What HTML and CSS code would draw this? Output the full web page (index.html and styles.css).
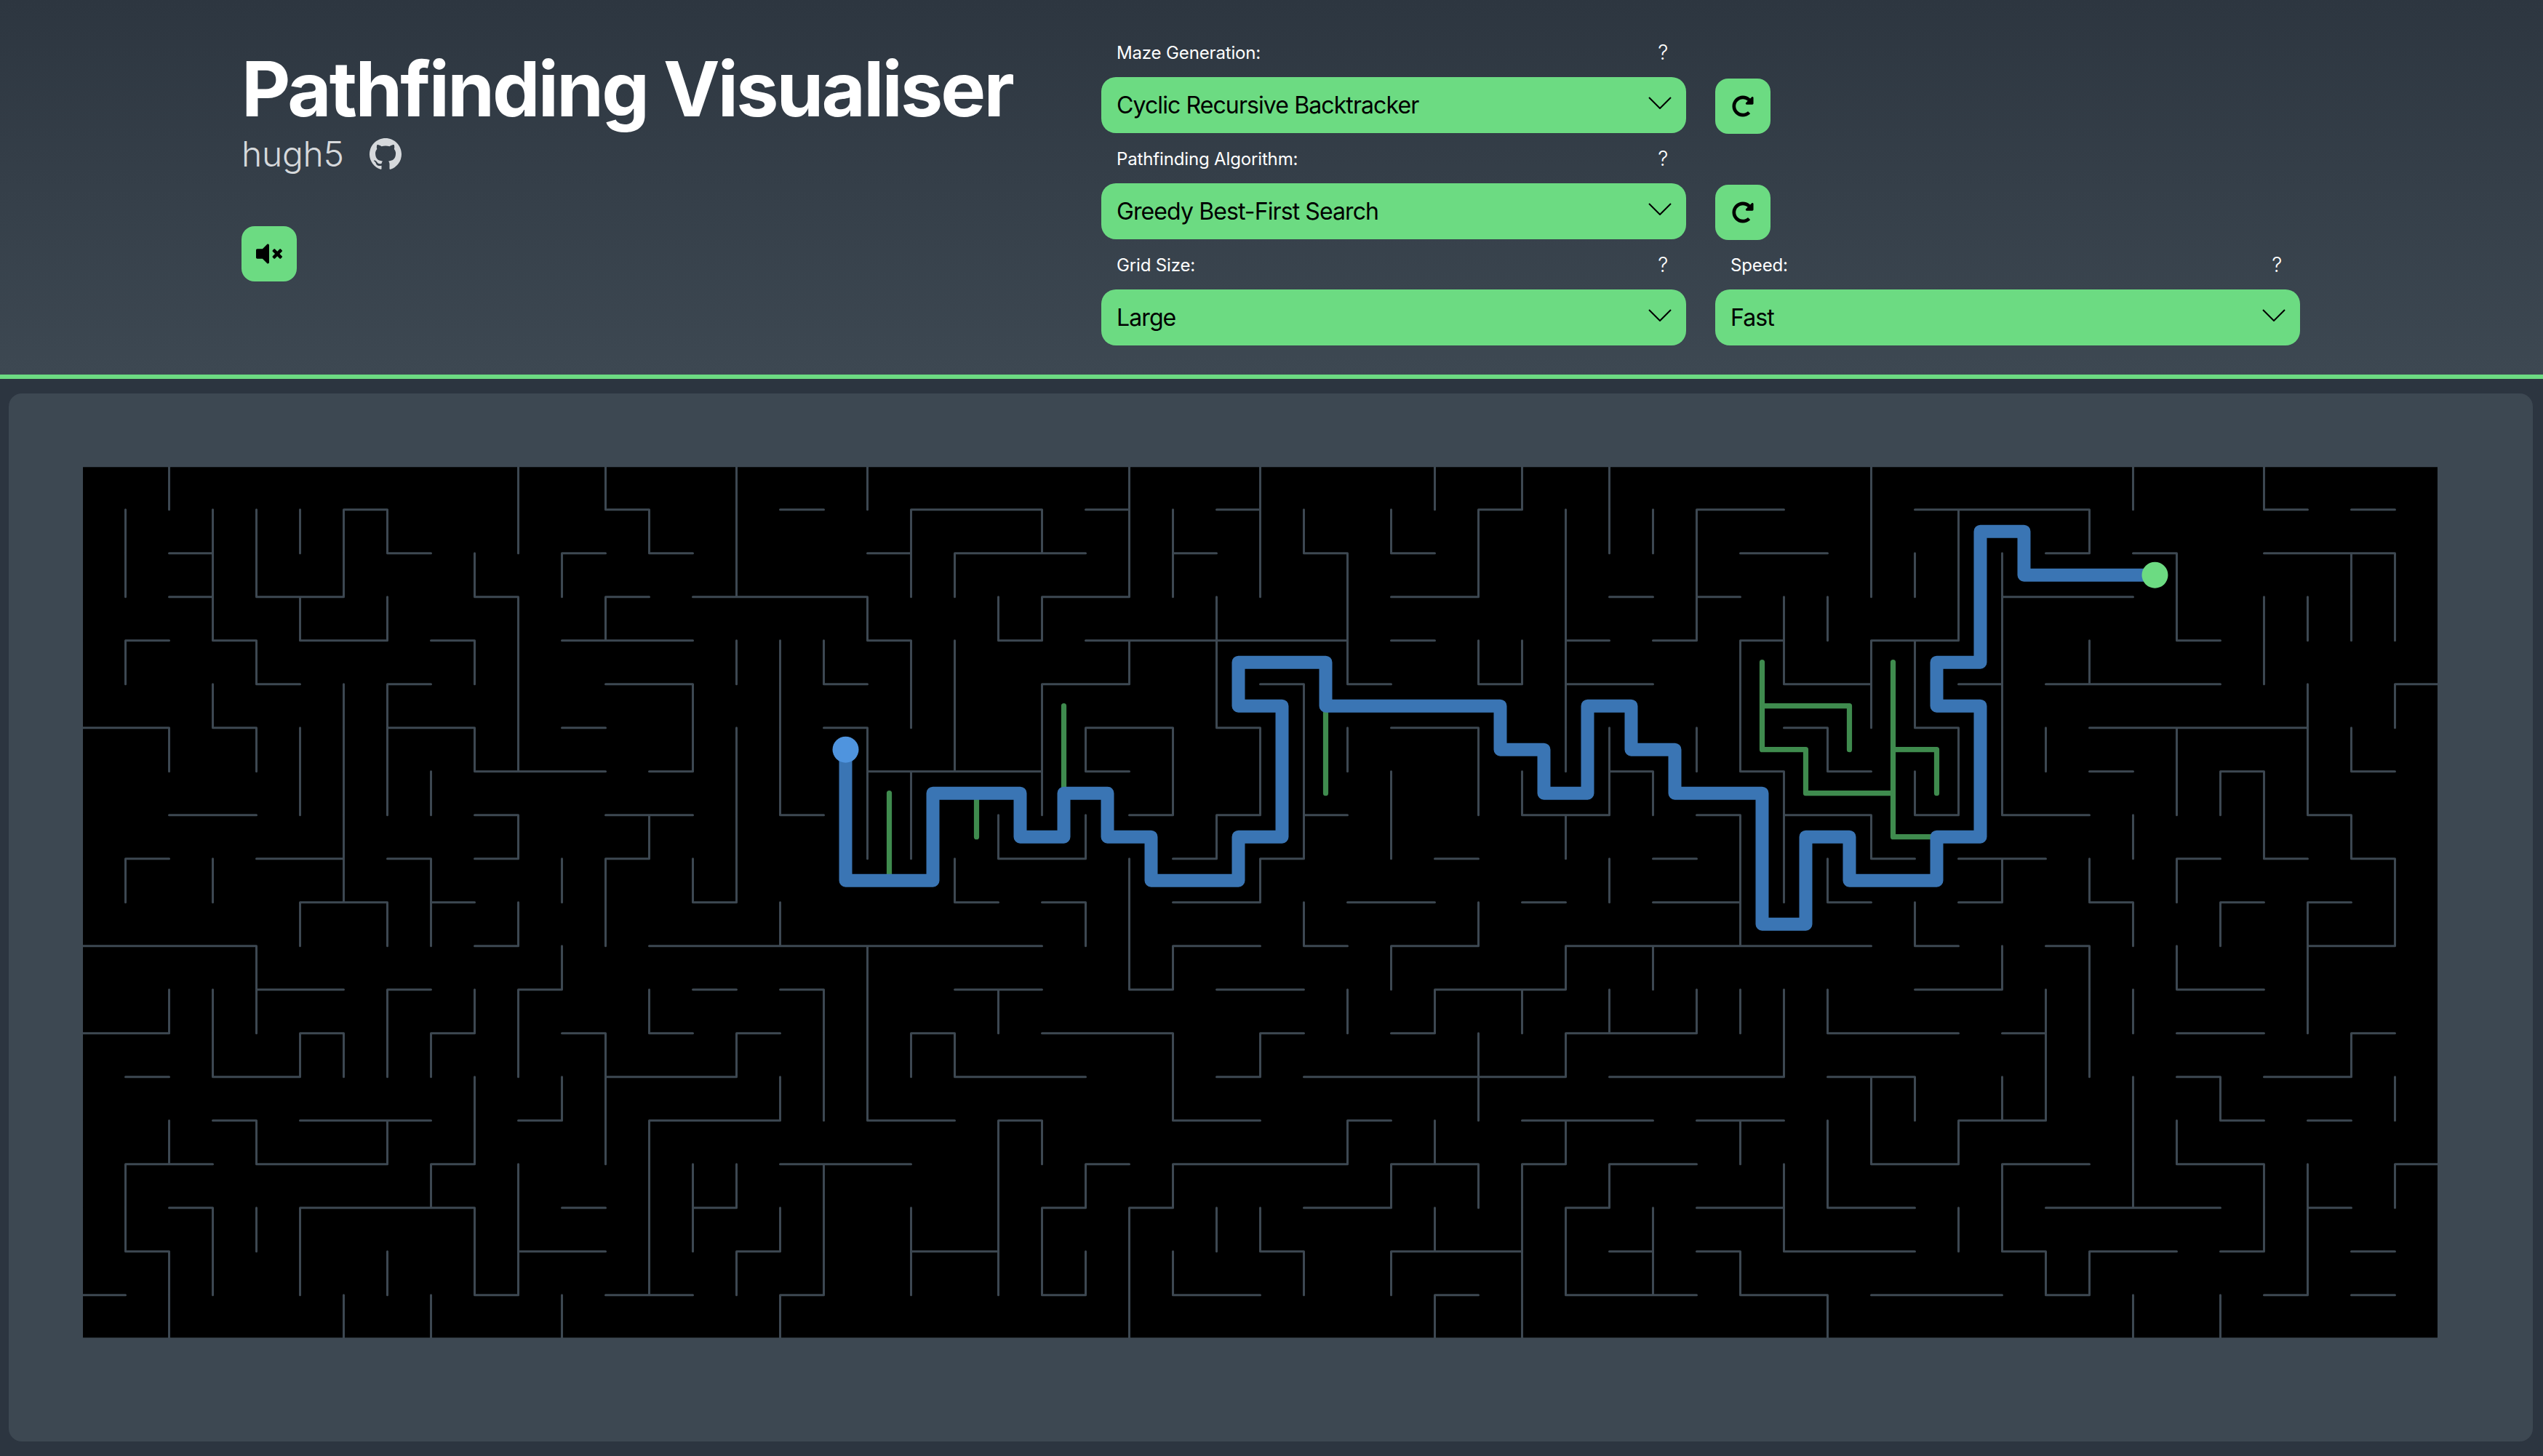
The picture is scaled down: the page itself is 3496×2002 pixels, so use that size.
FILE: index.html
```html
<!DOCTYPE html>
<html lang="en">
<head>
<meta charset="utf-8">
<title>Pathfinding Visualiser</title>
<link rel="stylesheet" href="styles.css">
</head>
<body>
<header class="top">
  <div class="brand">
    <h1 class="title">Pathfinding Visualiser</h1>
    <div class="author">
      <span class="author-name">hugh5</span>
      <svg class="github" viewBox="0 0 16 16"><path d="M8 0C3.58 0 0 3.58 0 8c0 3.54 2.29 6.53 5.47 7.59.4.07.55-.17.55-.38 0-.19-.01-.82-.01-1.49-2.01.37-2.53-.49-2.69-.94-.09-.23-.48-.94-.82-1.13-.28-.15-.68-.52-.01-.53.63-.01 1.08.58 1.23.82.72 1.21 1.87.87 2.33.66.07-.52.28-.87.51-1.07-1.78-.2-3.64-.89-3.64-3.95 0-.87.31-1.59.82-2.15-.08-.2-.36-1.02.08-2.12 0 0 .67-.21 2.2.82.64-.18 1.32-.27 2-.27.68 0 1.36.09 2 .27 1.53-1.04 2.2-.82 2.2-.82.44 1.1.16 1.92.08 2.12.51.56.82 1.27.82 2.15 0 3.07-1.87 3.75-3.65 3.95.29.25.54.73.54 1.48 0 1.07-.01 1.93-.01 2.2 0 .21.15.46.55.38A8.013 8.013 0 0016 8c0-4.42-3.58-8-8-8z"/></svg>
    </div>
    <button class="icon-btn mute" type="button" aria-label="Mute">
      <svg class="icon-mute" viewBox="0 0 512 512"><path d="M215.03 71.05L126.06 160H24c-13.26 0-24 10.74-24 24v144c0 13.25 10.74 24 24 24h102.06l88.97 88.95c15.03 15.03 40.97 4.47 40.97-16.97V88.02c0-21.46-25.96-31.98-40.97-16.97zM461.64 256l45.64-45.64c6.3-6.3 6.3-16.52 0-22.82l-22.82-22.82c-6.3-6.3-16.52-6.3-22.82 0L416 210.36l-45.64-45.64c-6.3-6.3-16.52-6.3-22.82 0l-22.82 22.82c-6.3 6.3-6.3 16.52 0 22.82L370.36 256l-45.63 45.63c-6.3 6.3-6.3 16.52 0 22.82l22.82 22.82c6.3 6.3 16.52 6.3 22.82 0L416 301.64l45.64 45.64c6.3 6.3 16.52 6.3 22.82 0l22.82-22.82c6.3-6.3 6.3-16.52 0-22.82L461.64 256z"/></svg>
    </button>
  </div>
  <div class="controls">
    <div class="field">
      <div class="field-label"><span>Maze Generation:</span><span class="help">?</span></div>
      <div class="select"><span>Cyclic Recursive Backtracker</span><svg class="chevron" viewBox="0 0 32 17"><path d="M1 1L16 16L31 1"/></svg></div>
    </div>
    <button class="icon-btn refresh" type="button" aria-label="Regenerate maze">
      <svg class="icon-redo" viewBox="0 0 512 512"><path d="M256.455 8c66.269.119 126.437 26.233 170.859 68.685l35.715-35.715C478.149 25.851 504 36.559 504 57.941V192c0 13.255-10.745 24-24 24H345.941c-21.382 0-32.09-25.851-16.971-40.971l41.75-41.75c-30.864-28.899-70.801-44.907-113.23-45.273-92.398-.798-170.283 73.977-169.484 169.442C88.764 348.009 162.184 424 256 424c41.127 0 79.997-14.678 110.629-41.556 4.743-4.161 11.906-3.908 16.368.553l39.662 39.662c4.872 4.872 4.631 12.815-.482 17.433C378.202 479.813 319.926 504 256 504 119.034 504 8.001 392.967 8 256.002 7.999 119.193 119.646 7.755 256.455 8z"/></svg>
    </button>
    <div class="field">
      <div class="field-label"><span>Pathfinding Algorithm:</span><span class="help">?</span></div>
      <div class="select"><span>Greedy Best-First Search</span><svg class="chevron" viewBox="0 0 32 17"><path d="M1 1L16 16L31 1"/></svg></div>
    </div>
    <button class="icon-btn refresh" type="button" aria-label="Rerun search">
      <svg class="icon-redo" viewBox="0 0 512 512"><path d="M256.455 8c66.269.119 126.437 26.233 170.859 68.685l35.715-35.715C478.149 25.851 504 36.559 504 57.941V192c0 13.255-10.745 24-24 24H345.941c-21.382 0-32.09-25.851-16.971-40.971l41.75-41.75c-30.864-28.899-70.801-44.907-113.23-45.273-92.398-.798-170.283 73.977-169.484 169.442C88.764 348.009 162.184 424 256 424c41.127 0 79.997-14.678 110.629-41.556 4.743-4.161 11.906-3.908 16.368.553l39.662 39.662c4.872 4.872 4.631 12.815-.482 17.433C378.202 479.813 319.926 504 256 504 119.034 504 8.001 392.967 8 256.002 7.999 119.193 119.646 7.755 256.455 8z"/></svg>
    </button>
    <div class="field">
      <div class="field-label"><span>Grid Size:</span><span class="help">?</span></div>
      <div class="select"><span>Large</span><svg class="chevron" viewBox="0 0 32 17"><path d="M1 1L16 16L31 1"/></svg></div>
    </div>
    <div class="field">
      <div class="field-label"><span>Speed:</span><span class="help">?</span></div>
      <div class="select"><span>Fast</span><svg class="chevron" viewBox="0 0 32 17"><path d="M1 1L16 16L31 1"/></svg></div>
    </div>
  </div>
</header>
<main class="stage">
  <svg class="maze" viewBox="0.025 0.022 53.95 19.967">
    <path class="walls" d="M0 0H54V20H0Z
M2 0V1M10 0V2M12 0V1M13 1V2M15 0V3M18 0V1M1 1V3M3 1V4M4 1V3M5 1V2M6 1V3M7 1V2M5 3V4M7 3V4M9 2V3M10 3V7M11 2V3M12 3V4M18 3V4M1 4V5M4 4V5M9 4V5M15 4V5M16 4V8M17 4V5M3 5V6M4 6V7M6 5V10M7 5V8M9 6V7M14 5V7M2 6V7M5 6V8M15 6V10M18 6V9M8 7V8M10 8V9M13 8V9M12 9V11M1 9V10M3 9V10M8 9V11M11 9V10M14 9V10M16 10V11M5 10V11M7 10V11M10 10V11
M4 11V13M11 11V12M10 12V14M18 11V15M2 12V13M3 12V14M5 13V14M6 13V14M7 12V14M9 12V13M8 13V14M13 12V13M17 12V15M12 13V16M15 13V14M9 14V16M8 16V17M11 14V15M16 14V15M13 15V19M2 15V16M1 16V18M2 18V20M4 15V16M7 15V16M3 17V19M4 17V18M5 17V19M9 17V19M10 16V19M7 18V19M6 19V20M8 19V20M11 19V20M14 16V18M15 16V17M16 17V18M15 18V19M17 16V19M16 19V20
M19 1V3M22 1V2M20 2V3M24 0V3M27 0V3M31 0V1M33 0V1M32 1V3M35 0V2M25 1V3M28 1V2M29 2V5M30 1V2M34 1V7M36 1V2M37 1V4M19 4V6M20 4V7M21 3V4M22 3V4M24 4V5M22 5V8M26 3V6M27 6V8M26 8V9M19 7V9M21 8V9M23 8V9M23 6V7M25 6V8M28 5V9M27 9V10M29 6V7M32 6V8M30 7V9M32 4V5M33 4V5M35 6V8M36 7V8M33 7V8M34 8V9M37 6V7M35 9V10M20 9V10M23 10V11M24 9V12M25 11V12M28 10V11M32 10V11M30 11V12M34 11V12M36 11V12
M21 12V13M31 12V13M33 12V13M29 12V13M35 12V13M37 12V13M34 13V14M32 13V15M19 13V14M20 13V14M25 13V15M27 13V14M29 15V16M25 16V17M24 17V20M31 15V16M30 16V17M32 16V17M34 15V16M33 16V20M21 15V19M22 15V16M23 16V17M22 17V19M23 18V19M19 17V19M26 17V18M27 17V18M28 18V19M25 18V19M31 17V18M30 18V19M31 19V20M35 16V17M34 17V19M36 17V19
M41 0V3M47 0V1M50 0V1M43 1V4M46 1V2M42 2V3M44 2V8M48 2V4M52 2V4M53 2V4M50 3V5M51 3V4M39 3V5M41 4V6M40 3V4M38 4V7M39 7V10M42 4V6M43 6V8M42 7V8M40 6V7M46 4V5M53 5V6M51 5V8M52 8V9M53 9V11M48 6V8M45 6V7M49 7V8M50 7V9M52 6V7M47 8V9M38 8V11M41 8V9M40 9V10M44 9V10M46 9V10M47 10V11M48 9V10M49 10V11M51 10V13M42 10V11M46 11V14M44 11V12M48 11V12
M45 12V15M44 14V15M43 15V16M41 14V16M42 14V15M47 12V13M38 12V13M39 12V14M40 12V13M52 13V14M49 14V15M47 14V17M53 14V15M38 15V16M40 15V17M39 16V18M38 18V19M40 19V20M43 17V18M44 16V18M45 18V19M46 18V19M48 15V16M50 16V18M51 16V19M53 16V17M47 19V20M49 19V20
M12 1H13M13 2H14M16 1H17M2 2H3M2 3H3M6 1H7M7 2H8M4 3H6M5 4H7M9 3H10M11 2H12M12 3H13M11 4H14M14 3H18M1 4H2M3 4H4M4 5H5M8 4H9M16 8H17M17 5H18M3 6H4M7 5H8M7 6H9M9 7H12M12 5H14M13 7H14M11 6H12M0 6H2M17 6H18M2 8H4M9 8H10M9 9H10M12 8H14M12 9H13M1 9H2M4 9H6M7 9H8M8 10H9M5 10H7M14 10H15M9 11H10
M0 11H4M4 12H6M10 12H11M13 11H22M34 11H41M18 15H20M0 13H2M3 14H5M5 13H6M7 12H8M8 13H9M13 13H14M14 12H15M16 12H17M11 13H12M12 14H15M15 13H16M1 14H2M8 16H9M10 15H11M13 15H16M12 19H14M1 16H3M1 18H2M3 15H4M4 16H7M5 15H8M2 17H3M5 17H9M9 19H10M10 18H12M11 17H12M0 19H1M14 17H15M15 18H16M16 16H19M16 19H17
M19 1H22M18 2H19M20 2H23M23 1H24M25 2H26M26 1H27M28 2H29M29 5H30M30 2H31M32 1H33M30 3H32M37 1H39M37 3H38M36 4H37M35 3H36M34 4H35M18 4H19M21 4H22M22 3H24M23 4H29M22 5H24M26 6H27M26 8H27M25 9H26M18 7H22M21 9H23M23 6H25M23 7H24M24 8H25M27 5H28M27 9H28M25 10H27M28 8H29M30 6H32M32 5H33M30 4H31M34 5H36M35 7H36M33 8H35M37 8H38M31 9H32M36 9H37M20 10H21M22 10H23M24 12H25M25 11H27M28 11H29M29 10H31M30 11H32M33 10H34M36 10H38M31 12H34M20 12H22M26 12H28
M30 13H31M34 13H37M28 14H34M35 14H39M19 13H20M20 14H23M22 13H25M25 15H27M27 13H28M26 14H27M29 15H30M25 16H29M24 17H25M30 16H32M28 17H30M33 15H36M33 16H34M37 15H39M21 15H22M23 16H24M22 17H23M22 19H23M19 18H21M27 18H28M25 19H27M30 18H33M31 19H32M35 16H37M34 17H35M34 19H37M35 18H36M37 17H39M37 18H38
M50 1H51M52 1H53M38 2H40M42 1H46M41 4H43M45 2H46M44 3H47M43 5H44M44 8H46M47 2H48M48 4H49M50 2H53M38 4H39M38 7H39M39 5H41M42 6H43M42 8H43M39 6H40M40 7H41M45 5H49M53 5H54M51 8H52M52 9H53M51 11H53M46 6H51M46 7H47M49 7H50M50 9H51M52 7H53M39 8H41M41 9H42M40 10H41M43 9H45M43 10H44M46 10H47M48 9H49M49 10H50M51 10H52M42 11H43M45 11H46M42 12H44M48 12H50
M44 13H45M43 15H45M41 16H43M40 14H42M48 13H50M40 13H43M52 13H53M50 14H52M48 14H49M49 15H50M45 17H49M51 15H52M40 17H42M39 18H42M38 19H40M41 19H44M44 16H46M44 18H45M45 19H46M46 18H48M48 16H50M49 18H50M51 17H52M50 19H51M53 16H54M52 18H53M52 19H53"/>
    <path class="visited" d="M18.5 7.5V9.5M20.5 7.5V8.5M22.5 5.5V7.5M28.5 5.5V7.5M38.5 4.5V6.5H39.5V7.5H41.5M38.5 5.5H40.5V6.5M41.5 4.5V8.5H42.5M41.5 6.5H42.5V7.5"/>
    <path class="route" d="M17.5 6.5V9.5H19.5V7.5H21.5V8.5H22.5V7.5H23.5V8.5H24.5V9.5H26.5V8.5H27.5V5.5H26.5V4.5H28.5V5.5H32.5V6.5H33.5V7.5H34.5V5.5H35.5V6.5H36.5V7.5H38.5V10.5H39.5V8.5H40.5V9.5H42.5V8.5H43.5V5.5H42.5V4.5H43.5V1.5H44.5V2.5H47.5"/>
    <circle class="start" cx="17.5" cy="6.5" r="0.3"/>
    <circle class="end" cx="47.5" cy="2.5" r="0.3"/>
  </svg>
</main>
</body>
</html>
```
FILE: styles.css
```css
html, body {
  margin: 0;
  padding: 0;
}
body {
  width: 3496px;
  height: 2002px;
  overflow: hidden;
  background: #2c3540;
  font-family: Inter, "Liberation Sans", sans-serif;
}
.top {
  box-sizing: border-box;
  height: 521px;
  display: flex;
  padding-left: 332px;
  background: linear-gradient(#2d3640, #3d4852);
  border-bottom: 6px solid #6cdb82;
}
.brand {
  width: 1182px;
  padding-top: 70px;
}
.title {
  margin: 0;
  font-size: 104px;
  line-height: 104px;
  font-weight: 700;
  letter-spacing: -2.8px;
  color: #fff;
}
.author {
  display: flex;
  align-items: center;
  gap: 35px;
  margin-top: 16px;
  height: 44px;
  color: #d6d9dc;
}
.author-name {
  font-size: 48px;
  line-height: 44px;
  font-weight: 300;
  letter-spacing: -0.3px;
}
.github {
  width: 44px;
  height: 44px;
  fill: #d6d9dc;
}
.icon-btn {
  display: flex;
  align-items: center;
  justify-content: center;
  width: 76px;
  height: 76px;
  padding: 0;
  border: 0;
  border-radius: 18px;
  background: #6cdb82;
}
.mute {
  margin-top: 77px;
}
.icon-mute {
  width: 36px;
  height: 36px;
}
.icon-redo {
  width: 30px;
  height: 30px;
}
.controls {
  display: grid;
  grid-template-columns: 804px 804px;
  column-gap: 40px;
  align-content: start;
  justify-items: start;
  align-items: end;
  padding-top: 37px;
}
.field {
  width: 804px;
}
.field-label {
  display: flex;
  justify-content: space-between;
  align-items: center;
  height: 69px;
  padding: 1px 25px 0 21px;
  box-sizing: border-box;
  font-size: 24px;
  letter-spacing: -0.15px;
  color: #fff;
}
.help {
  font-size: 28px;
  font-weight: 300;
}
.select {
  display: flex;
  justify-content: space-between;
  align-items: center;
  height: 77px;
  padding: 0 20px 0 21px;
  box-sizing: border-box;
  border-radius: 20px;
  background: #6cdb82;
  font-size: 32px;
  letter-spacing: -0.9px;
  color: #000;
}
.chevron {
  width: 32px;
  height: 17px;
  margin-top: -6px;
  fill: none;
  stroke: #000;
  stroke-width: 2;
}
.refresh {
  margin-bottom: -1px;
}
.stage {
  position: absolute;
  left: 12px;
  top: 541px;
  width: 3470px;
  height: 1441px;
  box-sizing: border-box;
  padding: 101px 0 0 101.5px;
  border-radius: 18px;
  background: #3d4852;
}
.maze {
  display: block;
  width: 3237px;
  height: 1198px;
  background: #000;
  fill: none;
  stroke-linecap: round;
  stroke-linejoin: round;
}
.walls {
  stroke: #3d4852;
  stroke-width: 0.05;
}
.visited {
  stroke: #3f8b4e;
  stroke-width: 0.12;
}
.route {
  stroke: #3a75b4;
  stroke-width: 0.3;
}
.start {
  fill: #4f94de;
}
.end {
  fill: #6cdb82;
}
```
